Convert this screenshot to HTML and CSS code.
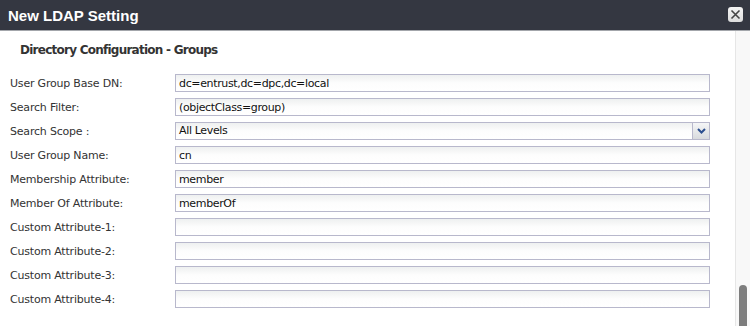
FILE: index.html
```html
<!DOCTYPE html>
<html lang="en">
  <head>
    <meta charset="UTF-8" />
    <title>New LDAP Setting</title>
    <link rel="stylesheet" href="styles.css">
  </head>
  <body>
    <div class="dialog">
      <div class="dialog-header">
        <div class="dialog-title">New LDAP Setting</div>
        <button class="close-btn" aria-label="Close">
          <svg width="11" height="11" viewBox="0 0 11 11">
            <path d="M1.5 1.5 L9.5 9.5 M9.5 1.5 L1.5 9.5" stroke="#444" stroke-width="1.6" fill="none" />
          </svg>
        </button>
      </div>
      <div class="dialog-body">
        <div class="content">
          <div class="section-title">Directory Configuration - Groups</div>
          <div class="form">
            <label class="field-label">User Group Base DN:</label>
            <input class="field" type="text" value="dc=entrust,dc=dpc,dc=local">

            <label class="field-label">Search Filter:</label>
            <input class="field" type="text" value="(objectClass=group)">

            <label class="field-label">Search Scope :</label>
            <div class="select">
              <span class="select-value">All Levels</span>
              <span class="select-btn">
                <svg width="9" height="6" viewBox="0 0 9 6">
                  <path d="M1 1 L4.5 4.5 L8 1" stroke="#2c4f8f" stroke-width="2" fill="none" />
                </svg>
              </span>
            </div>

            <label class="field-label">User Group Name:</label>
            <input class="field" type="text" value="cn">

            <label class="field-label">Membership Attribute:</label>
            <input class="field" type="text" value="member">

            <label class="field-label">Member Of Attribute:</label>
            <input class="field" type="text" value="memberOf">

            <label class="field-label">Custom Attribute-1:</label>
            <input class="field" type="text" value="">

            <label class="field-label">Custom Attribute-2:</label>
            <input class="field" type="text" value="">

            <label class="field-label">Custom Attribute-3:</label>
            <input class="field" type="text" value="">

            <label class="field-label">Custom Attribute-4:</label>
            <input class="field" type="text" value="">
          </div>
        </div>
        <div class="scrollbar">
          <div class="scroll-thumb"></div>
        </div>
      </div>
    </div>
  </body>
</html>
```

FILE: styles.css
```css
body, html {
    margin: 0;
    padding: 0;
    width: 750px;
    height: 326px;
    overflow: hidden;
    background-color: #fff;
    font-family: "DejaVu Sans", Verdana, sans-serif;
}

.dialog {
    display: flex;
    flex-direction: column;
    height: 326px;
}

.dialog-header {
    height: 30px;
    flex: none;
    background-color: #343741;
    border-bottom: 1px solid #a3a6ab;
    display: flex;
    align-items: center;
    justify-content: space-between;
    padding: 0 7px 0 8px;
}

.dialog-title {
    color: #fff;
    font-family: "Liberation Sans", Arial, sans-serif;
    font-weight: bold;
    font-size: 15px;
    margin-top: 1px;
}

.close-btn {
    width: 15px;
    height: 15px;
    padding: 0;
    border: none;
    border-radius: 3px;
    background: linear-gradient(#f4f4f4, #dcdcdc);
    display: flex;
    align-items: center;
    justify-content: center;
    margin-bottom: 2px;
}

.dialog-body {
    flex: 1;
    display: flex;
    overflow: hidden;
}

.content {
    flex: 1;
    padding: 12px 0 0 10px;
}

.section-title {
    font-weight: bold;
    font-size: 12px;
    color: #333;
    letter-spacing: -0.75px;
    padding-left: 10px;
    height: 31px;
}

.form {
    display: grid;
    grid-template-columns: 165px 535px;
    grid-auto-rows: 18px;
    row-gap: 6px;
    align-items: center;
}

.field-label {
    font-size: 11px;
    color: #333;
    letter-spacing: -0.2px;
}

.field {
    box-sizing: border-box;
    height: 18px;
    width: 535px;
    margin: 0;
    padding: 0 0 0 3px;
    border: 1px solid #b8b8cc;
    background: linear-gradient(#eef0f0, #fdfdfd 50%, #fff);
    font-family: "DejaVu Sans", Verdana, sans-serif;
    font-size: 11px;
    letter-spacing: -0.35px;
    color: #111;
    outline: none;
}

.select {
    box-sizing: border-box;
    height: 18px;
    width: 535px;
    display: flex;
    align-items: stretch;
    border: 1px solid #b8b8cc;
    background: linear-gradient(#eef0f0, #fdfdfd 50%, #fff);
}

.select-value {
    flex: 1;
    padding-left: 3px;
    font-size: 11px;
    letter-spacing: -0.35px;
    color: #111;
    line-height: 16px;
}

.select-btn {
    width: 16px;
    margin: -1px -1px -1px 0;
    border: 1px solid #b8b8cc;
    background: linear-gradient(#f5f6f7, #d8dadd);
    display: flex;
    align-items: center;
    justify-content: center;
}

.scrollbar {
    width: 14px;
    flex: none;
    background-color: #f8f8f8;
    border-left: 1px solid #e6e6e6;
    position: relative;
}

.scroll-thumb {
    position: absolute;
    left: 3px;
    top: 254px;
    width: 8px;
    height: 60px;
    border-radius: 4px;
    background-color: #7d7d7d;
}
```
